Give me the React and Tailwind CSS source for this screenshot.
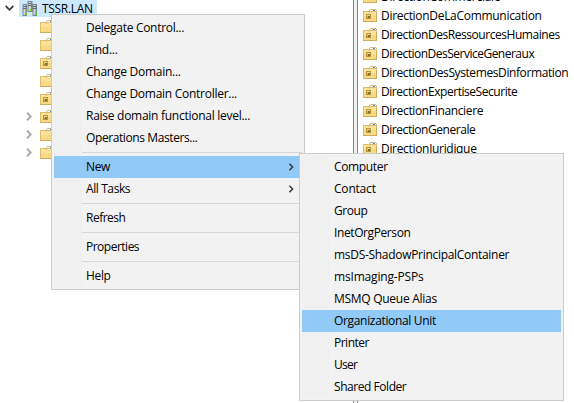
const ouRows = [
  ["DirectionCommerciale", "tracking-[-0.28px]"],
  ["DirectionDeLaCommunication", "tracking-[-0.3px]"],
  ["DirectionDesRessourcesHumaines", "tracking-[-0.45px]"],
  ["DirectionDesServiceGeneraux", "tracking-[-0.5px]"],
  ["DirectionDesSystemesDinformation", "tracking-[-0.4px]"],
  ["DirectionExpertiseSecurite", "tracking-[-0.45px]"],
  ["DirectionFinanciere", "tracking-[-0.35px]"],
  ["DirectionGenerale", "tracking-[-0.45px]"],
  ["DirectionJuridique", "tracking-[-0.32px]"],
];

const mainItems = [
  { label: "Delegate Control...", track: "tracking-[-0.29px]" },
  { label: "Find...", track: "tracking-[-0.25px]" },
  { label: "Change Domain...", track: "tracking-[-0.26px]" },
  { label: "Change Domain Controller...", track: "tracking-[-0.27px]" },
  { label: "Raise domain functional level...", track: "tracking-[-0.27px]" },
  { label: "Operations Masters...", track: "tracking-[-0.4px]" },
  null,
  { label: "New", track: "tracking-[-0.4px]", sub: true, active: true },
  { label: "All Tasks", track: "tracking-[-0.4px]", sub: true },
  null,
  { label: "Refresh", track: "tracking-[-0.5px]" },
  null,
  { label: "Properties", track: "tracking-[-0.5px]" },
  null,
  { label: "Help", track: "tracking-[-0.35px]" },
];

const newItems = [
  { label: "Computer", track: "tracking-[-0.35px]" },
  { label: "Contact", track: "tracking-[-0.2px]" },
  { label: "Group", track: "tracking-[-0.45px]" },
  { label: "InetOrgPerson", track: "tracking-[-0.4px]" },
  { label: "msDS-ShadowPrincipalContainer", track: "tracking-[-0.3px]" },
  { label: "msImaging-PSPs", track: "tracking-[-0.17px]" },
  { label: "MSMQ Queue Alias", track: "tracking-[-0.28px]" },
  { label: "Organizational Unit", track: "tracking-[-0.33px]", active: true },
  { label: "Printer", track: "tracking-[-0.5px]" },
  { label: "User", track: "tracking-[-0.7px]" },
  { label: "Shared Folder", track: "tracking-[-0.45px]" },
];

const treeRows = [
  { ou: false }, { ou: false }, { ou: true }, { ou: false },
  { ou: true }, { ou: true, more: true }, { more: true }, { more: true },
];

function Folder({ ou }) {
  return (
    <svg className="block shrink-0" width="14" height="13" viewBox="0 0 14 13" shapeRendering="crispEdges">
      <path d="M0 2H6V3H14V13H0Z" fill="#dcbd6c" />
      <path d="M6 1H7V0H13V1H14V4H6Z" fill="#d8bc78" />
      <path d="M7 1H13V2H7Z" fill="#fff" />
      <path d="M10 1H12V2H10Z" fill="#3c8df0" />
      <path d="M1 3H6V4H7V3H13V12H1Z" fill="#fde29a" />
      <path d="M1 7H13V12H1Z" fill="#f8d985" />
      <path d="M13 4H14V13H13ZM0 12H14V13H0Z" fill="#cfab58" />
      {ou && (
        <>
          <path d="M3 5H8V10H3Z" fill="#b3943f" />
          <path d="M4 6H7V9H4Z" fill="#cfb05a" />
          <path d="M5 7H7V9H5Z" fill="#8b6d20" />
          <path d="M4 6H7V7H4Z" fill="#f0db95" />
        </>
      )}
    </svg>
  );
}

function Chevron({ className }) {
  return (
    <svg className={className} width="6" height="9" viewBox="0 0 6 9" fill="none" stroke="currentColor" strokeWidth="1.8">
      <path d="M1 0.7L4.7 4.5L1 8.3" />
    </svg>
  );
}

function SubmenuArrow() {
  return (
    <svg className="mr-[8px] shrink-0" width="6" height="8" viewBox="0 0 6 8" fill="none" stroke="#333" strokeWidth="1.4">
      <path d="M1.4 0.8L4.6 4L1.4 7.2" />
    </svg>
  );
}

function Servers() {
  return (
    <svg className="block shrink-0" width="16" height="16" viewBox="0 0 16 16">
      <path d="M5.5 0H10.5V11H5.5ZM0.5 3H5V15H0.5ZM10.5 3H15V15H10.5Z" fill="#7d898f" />
      <path d="M6.5 1H9V10H6.5ZM1.5 4H3.5V14H1.5ZM11.5 4H13.5V14H11.5Z" fill="#d0d6d8" />
      <path d="M6 2.5H9.5M6 4.5H9.5M1 5.5H4.5M1 7.5H4.5M11 5.5H14.5M11 7.5H14.5" stroke="#5f6c73" />
      <path d="M8 8H10V10H8ZM3 12H5V14H3ZM13 12H15V14H13Z" fill="#4bd31a" />
    </svg>
  );
}

function Menu({ items, className, labelClass }) {
  return (
    <div className={`absolute border border-[#ccc] bg-[#f2f2f2] p-[2px] ${className}`}>
      <div className="bg-linear-to-r from-[#f0f0f0] from-[28px] to-[#f2f2f2] to-[28px]">
        {items.map((item, i) =>
          item ? (
            <div key={i} className={`flex h-[22px] items-center ${labelClass} ${item.active ? "bg-[#91c9f7]" : ""}`}>
              <span className={`grow ${item.track}`}>{item.label}</span>
              {item.sub && <SubmenuArrow />}
            </div>
          ) : (
            <div key={i} className="flex h-[7px] items-center pl-[28px]">
              <div className="h-px grow bg-[#d7d7d7]" />
            </div>
          )
        )}
      </div>
    </div>
  );
}

export default function App() {
  return (
    <div className="relative flex h-[403px] w-[574px] overflow-hidden bg-white font-['Open_Sans','Noto_Sans',sans-serif] text-[12px] leading-[16px] whitespace-nowrap text-black">
      <div className="w-[353px] shrink-0">
        <div className="flex h-[17px] items-center">
          <svg className="ml-[5px] shrink-0" width="9" height="7" viewBox="0 0 9 7" fill="none" stroke="#404040" strokeWidth="1.8">
            <path d="M0.7 1L4.5 4.8L8.3 1" />
          </svg>
          <div className="ml-[5px] flex h-[17px] w-[78px] items-center bg-[#cce8ff] pl-[3px]">
            <Servers />
            <span className="ml-[4px] tracking-[-0.3px]">TSSR.LAN</span>
          </div>
        </div>
        {treeRows.map((row, i) => (
          <div key={i} className="flex h-[18px] items-center">
            <div className="ml-[26px] w-[14px]">{row.more && <Chevron className="text-[#a6a6a6]" />}</div>
            <Folder ou={row.ou} />
          </div>
        ))}
      </div>
      <div className="w-[5px] shrink-0 border-x border-[#828790] bg-[#f0f0f0]" />
      <div className="-mt-[13px] grow">
        {ouRows.map(([name, track]) => (
          <div key={name} className="flex h-[19px] items-center pl-[5px]">
            <Folder ou />
            <span className={`ml-[4px] ${track}`}>{name}</span>
          </div>
        ))}
      </div>
      <Menu items={mainItems} className="top-[14px] left-[51px] w-[254px]" labelClass="pl-[32px]" />
      <Menu items={newItems} className="top-[153px] left-[299px] w-[265px]" labelClass="pl-[32px]" />
    </div>
  );
}
